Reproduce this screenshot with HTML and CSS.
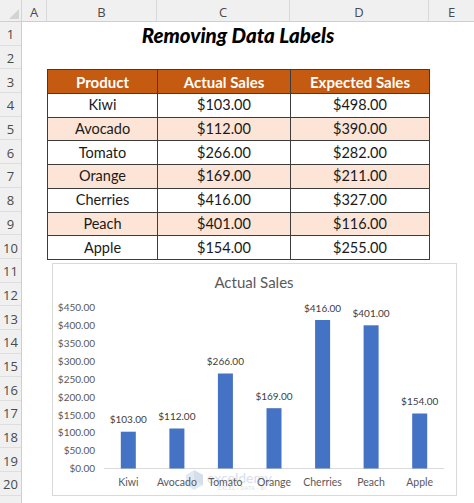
FILE: index.html
```html
<!DOCTYPE html>
<html>
<head>
<meta charset="utf-8">
<link rel="stylesheet" href="styles.css">
</head>
<body>
<div class="sheet">
  <div class="colheads">
    <div class="corner"><span class="tri"></span></div>
    <div class="ch col-a">A</div>
    <div class="ch col-b">B</div>
    <div class="ch col-c">C</div>
    <div class="ch col-d">D</div>
    <div class="ch col-e">E</div>
  </div>
  <div class="body">
    <div class="rownums">
      <div class="rn">1</div><div class="rn">2</div><div class="rn">3</div><div class="rn">4</div>
      <div class="rn">5</div><div class="rn">6</div><div class="rn">7</div><div class="rn">8</div>
      <div class="rn">9</div><div class="rn">10</div><div class="rn">11</div><div class="rn">12</div>
      <div class="rn">13</div><div class="rn">14</div><div class="rn">15</div><div class="rn">16</div>
      <div class="rn">17</div><div class="rn">18</div><div class="rn">19</div><div class="rn">20</div>
      <div class="rn"></div>
    </div>
    <div class="main">
      <div class="row title-row"><div class="title">Removing Data Labels</div></div>
      <div class="row"></div>
      <table class="data">
        <tr class="hd"><th>Product</th><th>Actual Sales</th><th>Expected Sales</th></tr>
        <tr><td>Kiwi</td><td>$103.00</td><td>$498.00</td></tr>
        <tr class="alt"><td>Avocado</td><td>$112.00</td><td>$390.00</td></tr>
        <tr><td>Tomato</td><td>$266.00</td><td>$282.00</td></tr>
        <tr class="alt"><td>Orange</td><td>$169.00</td><td>$211.00</td></tr>
        <tr><td>Cherries</td><td>$416.00</td><td>$327.00</td></tr>
        <tr class="alt"><td>Peach</td><td>$401.00</td><td>$116.00</td></tr>
        <tr><td>Apple</td><td>$154.00</td><td>$255.00</td></tr>
      </table>
      <div class="chart">
        <svg width="405" height="233" viewBox="0 0 405 233" xmlns="http://www.w3.org/2000/svg">
          <text class="ctitle" x="202" y="25.3" text-anchor="middle">Actual Sales</text>
          <g class="ylab" text-anchor="end">
            <text x="43" y="209">$0.00</text>
            <text x="43" y="191.2">$50.00</text>
            <text x="43" y="173.3">$100.00</text>
            <text x="43" y="155.5">$150.00</text>
            <text x="43" y="137.6">$200.00</text>
            <text x="43" y="119.8">$250.00</text>
            <text x="43" y="101.9">$300.00</text>
            <text x="43" y="84.1">$350.00</text>
            <text x="43" y="66.2">$400.00</text>
            <text x="43" y="48.4">$450.00</text>
          </g>
          <g class="wm">
            <path d="M134 212 L142 207 L151 212 L151 222 L142 227 L134 222 Z" fill="#e3e9f2"/>
            <path d="M142 207 L151 212 L151 222 L142 217 Z" fill="#d5deeb"/>
            <text class="wmt" x="155" y="220">exceldemy</text>
            <text class="wms" x="166" y="227">EXCEL · DATA · BI</text>
          </g>
          <line x1="52" y1="205.5" x2="392" y2="205.5" stroke="#d9d9d9" stroke-width="1"/>
          <g fill="#4472c4">
            <rect x="68.8" y="168.7" width="15" height="36.8"/>
            <rect x="117.4" y="165.5" width="15" height="40"/>
            <rect x="165.9" y="110.5" width="15" height="95"/>
            <rect x="214.5" y="145.2" width="15" height="60.3"/>
            <rect x="263.1" y="57" width="15" height="148.5"/>
            <rect x="311.6" y="62.3" width="15" height="143.2"/>
            <rect x="360.2" y="150.5" width="15" height="55"/>
          </g>
          <g class="dlab" text-anchor="middle">
            <text x="76.3" y="160.2">$103.00</text>
            <text x="124.9" y="157">$112.00</text>
            <text x="173.4" y="102">$266.00</text>
            <text x="222" y="136.7">$169.00</text>
            <text x="270.6" y="48.5">$416.00</text>
            <text x="319.1" y="53.8">$401.00</text>
            <text x="367.7" y="142">$154.00</text>
          </g>
          <g class="clab" text-anchor="middle">
            <text x="76.3" y="222.5">Kiwi</text>
            <text x="124.9" y="222.5">Avocado</text>
            <text x="173.4" y="222.5">Tomato</text>
            <text x="222" y="222.5">Orange</text>
            <text x="270.6" y="222.5">Cherries</text>
            <text x="319.1" y="222.5">Peach</text>
            <text x="367.7" y="222.5">Apple</text>
          </g>
        </svg>
      </div>
    </div>
  </div>
</div>
</body>
</html>
```
FILE: styles.css
```css
* { box-sizing: border-box; }
html, body { margin: 0; padding: 0; background: #ffffff; }
body { width: 474px; height: 503px; overflow: hidden; font-family: Lato, "Open Sans", sans-serif; }

.sheet { width: 474px; height: 503px; display: flex; flex-direction: column; }

.colheads {
  display: flex;
  height: 22px;
  background: #f0f0f0;
  border-bottom: 1px solid #cfcfcf;
  flex: none;
}
.corner {
  width: 22px;
  border-right: 1px solid #d4d4d4;
  position: relative;
}
.tri {
  position: absolute;
  right: 2px;
  bottom: 2px;
  width: 0; height: 0;
  border-left: 10px solid transparent;
  border-bottom: 10px solid #d3d3d3;
}
.ch {
  display: flex;
  align-items: center;
  justify-content: center;
  font-family: "Open Sans", sans-serif;
  font-size: 13px;
  color: #4a4a4a;
  border-right: 1px solid #d8d8d8;
  padding-top: 2px;
}
.col-a { width: 25px; }
.col-b { width: 110px; }
.col-c { width: 133px; }
.col-d { width: 139px; }
.col-e { flex: 1; border-right: none; }

.body { display: flex; flex: 1; }
.rownums {
  width: 22px;
  background: #f0f0f0;
  border-right: 1px solid #cfcfcf;
  display: flex;
  flex-direction: column;
  flex: none;
}
.rn {
  height: 23.7px;
  flex: none;
  display: flex;
  align-items: center;
  justify-content: center;
  font-family: "Open Sans", sans-serif;
  font-size: 13px;
  color: #4a4a4a;
  border-bottom: 1px solid #dedede;
  padding-top: 2px;
}

.main { flex: 1; display: flex; flex-direction: column; }
.row { height: 23.7px; flex: none; }
.title-row { padding-left: 25px; }
.title {
  width: 382px;
  height: 23.7px;
  line-height: 26px;
  text-align: center;
  font-weight: 900;
  font-style: italic;
  font-size: 20.5px;
  color: #000;
}

.data {
  margin-left: 25px;
  width: 383px;
  border-collapse: collapse;
  table-layout: fixed;
  flex: none;
}
.data th, .data td {
  height: 23.7px;
  padding: 0;
  text-align: center;
  border: 1px solid #3c3c3c;
  font-size: 14.5px;
  color: #1a1a1a;
  line-height: 20px;
}
.data th:nth-child(1) { width: 110px; }
.data th:nth-child(2) { width: 133px; }
.data th:nth-child(3) { width: 139px; }
.data .hd th {
  background: #c55a11;
  color: #ffffff;
  font-weight: 700;
  font-size: 15px;
}
.data .alt td { background: #fce4d6; }

.chart {
  margin-top: 3px;
  margin-left: 30px;
  width: 405px;
  height: 233px;
  border: 1px solid #d9d9d9;
  background: #fff;
  flex: none;
}
.chart svg { display: block; margin: -1px 0 0 -1px; font-family: Lato, "Open Sans", sans-serif; }
.ctitle { font-size: 15px; fill: #595959; }
.ylab text { font-size: 10px; fill: #595959; }
.dlab text { font-size: 10px; fill: #404040; }
.clab text { font-size: 10.5px; fill: #595959; }
.wmt { font-size: 14px; fill: #d8e0ec; }
.wms { font-size: 5px; fill: #d8dce3; letter-spacing: 0.5px; }
```
